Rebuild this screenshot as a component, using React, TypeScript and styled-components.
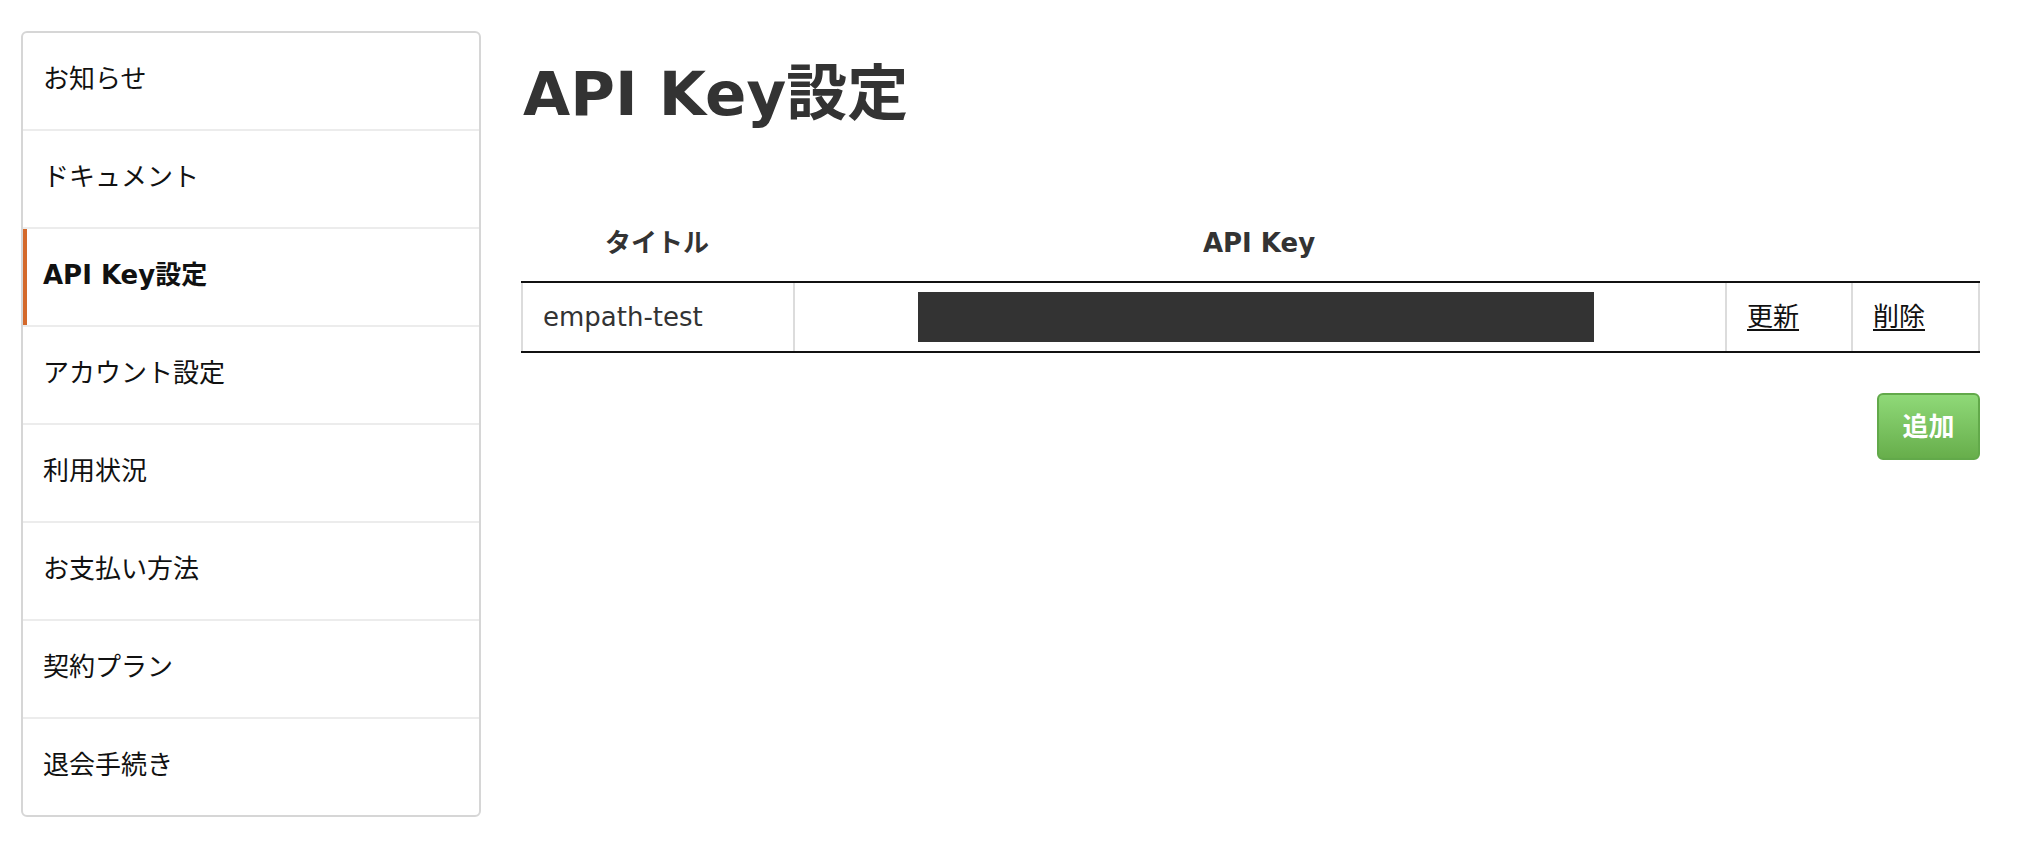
import React from "react";
import styled, { createGlobalStyle } from "styled-components";

const GlobalStyle = createGlobalStyle`
  html, body {
    margin: 0;
    padding: 0;
    background: #fff;
  }
  body {
    font-family: "DejaVu Sans", "Noto Sans CJK JP", sans-serif;
    color: #333;
  }
`;

const Page = styled.div`
  display: flex;
  align-items: flex-start;
  gap: 40px;
  padding: 31px 46px 0 21px;
`;

const SideMenu = styled.nav`
  width: 456px;
  flex-shrink: 0;
  border: 2px solid #d6d6d6;
  border-radius: 6px;
  overflow: hidden;
`;

const MenuItem = styled.a<{ $active?: boolean }>`
  display: flex;
  align-items: center;
  height: 91px;
  padding: 0 20px 5px;
  border-bottom: 2px solid #ececec;
  font-size: 26px;
  line-height: 1;
  color: #111;
  text-decoration: none;
  font-weight: ${(p) => (p.$active ? 700 : 400)};
  box-shadow: ${(p) => (p.$active ? "inset 4px 0 0 #d4692b" : "none")};

  &:last-child {
    border-bottom: none;
  }
`;

const Main = styled.main`
  width: 1459px;
  display: flex;
  flex-direction: column;
`;

const Title = styled.h1`
  margin: 27px 0 75px 2px;
  font-size: 61px;
  line-height: 72px;
  font-weight: 700;
  color: #333;
`;

const GridRow = styled.div`
  display: grid;
  grid-template-columns: 272px 932px 126px 1fr;
`;

const HeadRow = styled(GridRow)`
  height: 76px;
`;

const HeadCell = styled.div`
  display: flex;
  align-items: center;
  justify-content: center;
  font-size: 26px;
  line-height: 1;
  font-weight: 700;
  color: #333;
`;

const BodyRow = styled(GridRow)`
  border-top: 2px solid #111;
  border-bottom: 2px solid #111;
`;

const Cell = styled.div<{ $center?: boolean }>`
  display: flex;
  align-items: center;
  justify-content: ${(p) => (p.$center ? "center" : "flex-start")};
  height: 68px;
  padding: 0 20px;
  border-left: 2px solid #dcdcdc;
  font-size: 26px;
  line-height: 1;
  color: #333;

  &:last-child {
    border-right: 2px solid #dcdcdc;
  }
`;

const MaskedKey = styled.div`
  width: 676px;
  height: 50px;
  margin-right: 8px;
  background: #333;
`;

const ActionLink = styled.a`
  color: #111;
  text-decoration: underline;
  text-underline-offset: 3px;
  cursor: pointer;
`;

const Actions = styled.div`
  display: flex;
  justify-content: flex-end;
  margin-top: 40px;
`;

const AddButton = styled.button`
  width: 103px;
  height: 67px;
  border: 2px solid #62a94a;
  border-radius: 6px;
  background: linear-gradient(to bottom, #8fd978, #67ae4b);
  color: #fff;
  font-family: inherit;
  font-size: 26px;
  line-height: 1;
  font-weight: 700;
  cursor: pointer;
`;

const menu = [
  "お知らせ",
  "ドキュメント",
  "API Key設定",
  "アカウント設定",
  "利用状況",
  "お支払い方法",
  "契約プラン",
  "退会手続き",
];

export default function App() {
  return (
    <>
      <GlobalStyle />
      <Page>
        <SideMenu>
          {menu.map((label) => (
            <MenuItem key={label} $active={label === "API Key設定"}>
              {label}
            </MenuItem>
          ))}
        </SideMenu>
        <Main>
          <Title>API Key設定</Title>
          <HeadRow>
            <HeadCell>タイトル</HeadCell>
            <HeadCell>API Key</HeadCell>
            <HeadCell />
            <HeadCell />
          </HeadRow>
          <BodyRow>
            <Cell>empath-test</Cell>
            <Cell $center>
              <MaskedKey />
            </Cell>
            <Cell>
              <ActionLink>更新</ActionLink>
            </Cell>
            <Cell>
              <ActionLink>削除</ActionLink>
            </Cell>
          </BodyRow>
          <Actions>
            <AddButton>追加</AddButton>
          </Actions>
        </Main>
      </Page>
    </>
  );
}
